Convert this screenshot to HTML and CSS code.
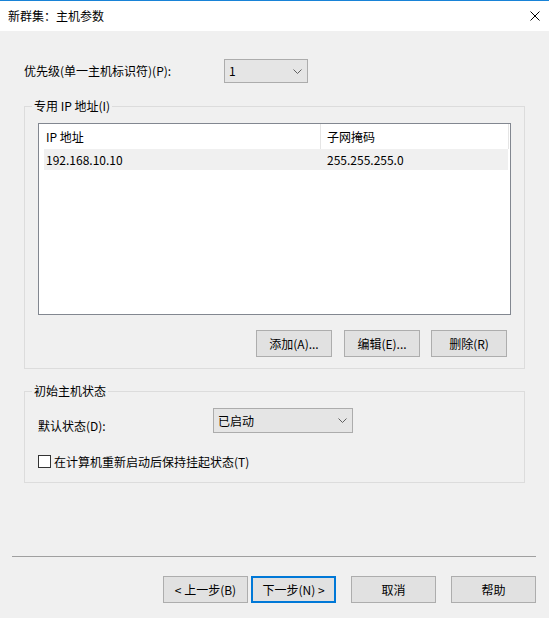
FILE: index.html
```html
<!DOCTYPE html>
<html lang="zh-CN">
<head>
<meta charset="utf-8">
<title>新群集：主机参数</title>
<link rel="stylesheet" href="styles.css">
</head>
<body>
<div class="dialog">
  <div class="titlebar">
    <span class="title">新群集：主机参数</span>
    <span class="close">
      <svg width="10" height="10" viewBox="0 0 10 10"><path d="M0.5 0.5 L9.5 9.5 M9.5 0.5 L0.5 9.5" stroke="#000" stroke-width="1" fill="none"/></svg>
    </span>
  </div>
  <div class="content">
    <div class="prio-row">
      <span class="prio-label">优先级(单一主机标识符)(P):</span>
      <div class="combo combo-prio">
        <span class="combo-text">1</span>
        <svg class="chev" width="9" height="5" viewBox="0 0 9 5"><path d="M0.5 0.5 L4.5 4.5 L8.5 0.5" stroke="#606060" stroke-width="1" fill="none"/></svg>
      </div>
    </div>

    <fieldset class="group group-ip">
      <legend class="legend">专用 IP 地址(I)</legend>
      <div class="list">
        <div class="list-head">
          <div class="hcell hcell-ip">IP 地址</div>
          <div class="hcell hcell-mask">子网掩码</div>
        </div>
        <div class="list-row">
          <div class="cell cell-ip">192.168.10.10</div>
          <div class="cell cell-mask">255.255.255.0</div>
        </div>
      </div>
      <div class="btn-row">
        <button class="btn btn-small">添加(A)...</button>
        <button class="btn btn-small">编辑(E)...</button>
        <button class="btn btn-small">删除(R)</button>
      </div>
    </fieldset>

    <fieldset class="group group-state">
      <legend class="legend">初始主机状态</legend>
      <div class="state-row">
        <span class="state-label">默认状态(D):</span>
        <div class="combo combo-state">
          <span class="combo-text">已启动</span>
          <svg class="chev" width="9" height="5" viewBox="0 0 9 5"><path d="M0.5 0.5 L4.5 4.5 L8.5 0.5" stroke="#606060" stroke-width="1" fill="none"/></svg>
        </div>
      </div>
      <label class="check-row">
        <span class="checkbox"></span>
        <span class="check-label">在计算机重新启动后保持挂起状态(T)</span>
      </label>
    </fieldset>

    <div class="footer">
      <div class="separator"></div>
      <div class="footer-buttons">
        <button class="btn btn-wide">&lt; 上一步(B)</button>
        <button class="btn btn-wide btn-default">下一步(N) &gt;</button>
        <button class="btn btn-wide btn-gap">取消</button>
        <button class="btn btn-wide btn-gap">帮助</button>
      </div>
    </div>
  </div>
</div>
</body>
</html>
```

FILE: styles.css
```css
* { box-sizing: border-box; }

html, body {
  margin: 0;
  padding: 0;
}

body {
  width: 549px;
  height: 618px;
  overflow: hidden;
  font-family: "Noto Sans CJK SC", "Noto Sans", sans-serif;
  font-size: 12px;
  color: #000;
  background: #f0f0f0;
}

.dialog {
  width: 549px;
  height: 618px;
  display: flex;
  flex-direction: column;
  border-top: 1px solid #1883d7;
}

.titlebar {
  height: 30px;
  background: #fff;
  display: flex;
  align-items: center;
  justify-content: space-between;
  padding: 0 9px 0 8px;
  flex-shrink: 0;
}

.title {
  line-height: 16px;
}

.close {
  display: flex;
  width: 10px;
  height: 10px;
}

.content {
  flex: 1;
  display: flex;
  flex-direction: column;
  background: #f0f0f0;
}

.prio-row {
  display: flex;
  align-items: center;
  margin-top: 28px;
  padding-left: 24px;
  height: 24px;
}

.prio-label {
  width: 200px;
  line-height: 16px;
}

.combo {
  display: flex;
  align-items: center;
  justify-content: space-between;
  background: #e5e5e5;
  border: 1px solid #acacac;
  padding: 0 5px 0 4px;
}

.combo-prio {
  width: 84px;
  height: 24px;
}

.combo-state {
  width: 140px;
  height: 25px;
}

.combo-text {
  line-height: 16px;
}

.chev { display: block; }

.group {
  margin: 0 0 0 24px;
  width: 501px;
  min-width: 0;
  min-inline-size: 0;
  border: 1px solid #dcdcdc;
  padding: 0;
}

.legend {
  margin-left: -6px;
  padding: 0 2px;
  line-height: 16px;
}

.group-ip {
  margin-top: 15px;
  padding: 9px 14px 11px 13px;
}

.list {
  width: 473px;
  height: 192px;
  background: #fff;
  border: 1px solid #828790;
}

.list-head {
  display: flex;
  height: 25px;
}

.hcell {
  height: 25px;
  display: flex;
  align-items: center;
  border-right: 1px solid #e5e5e5;
  line-height: 16px;
}

.hcell-ip {
  width: 282px;
  padding-left: 7px;
}

.hcell-mask {
  width: 188px;
  padding-left: 6px;
}

.list-row {
  display: flex;
  margin-left: 5px;
  width: 464px;
  height: 21px;
  background: #f0f0f0;
}

.cell {
  display: flex;
  align-items: center;
  line-height: 16px;
}

.cell-ip {
  width: 277px;
  padding-left: 2px;
}

.cell-mask {
  padding-left: 6px;
}

.btn-row {
  display: flex;
  justify-content: flex-end;
  gap: 11px;
  margin-top: 15px;
  padding-right: 3px;
}

.btn {
  font-family: inherit;
  font-size: 12px;
  color: #000;
  background: #e1e1e1;
  border: 1px solid #adadad;
  height: 27px;
  padding: 0;
  margin: 0;
  line-height: 16px;
}

.btn-small {
  width: 76px;
}

.btn-small:first-child {
  margin-right: 1px;
}

.group-state {
  margin-top: 14px;
  padding: 9px 13px 14px 13px;
}

.state-row {
  display: flex;
  align-items: center;
  height: 25px;
}

.state-label {
  width: 175px;
  line-height: 16px;
  padding-top: 11px;
}

.check-row {
  display: flex;
  align-items: center;
  margin-top: 22px;
  height: 13px;
}

.checkbox {
  width: 13px;
  height: 13px;
  border: 1px solid #333;
  background: #fff;
  flex-shrink: 0;
}

.check-label {
  margin-left: 3px;
  line-height: 16px;
}

.footer {
  margin-top: auto;
  padding-bottom: 15px;
}

.separator {
  height: 1px;
  background: #a0a0a0;
  margin: 0 13px 0 12px;
}

.footer-buttons {
  display: flex;
  justify-content: flex-end;
  gap: 3px;
  margin-top: 19px;
  padding-right: 13px;
}

.btn-wide {
  width: 85px;
}

.btn-gap {
  margin-left: 12px;
}

.btn-default {
  border: 2px solid #0078d7;
}
```
